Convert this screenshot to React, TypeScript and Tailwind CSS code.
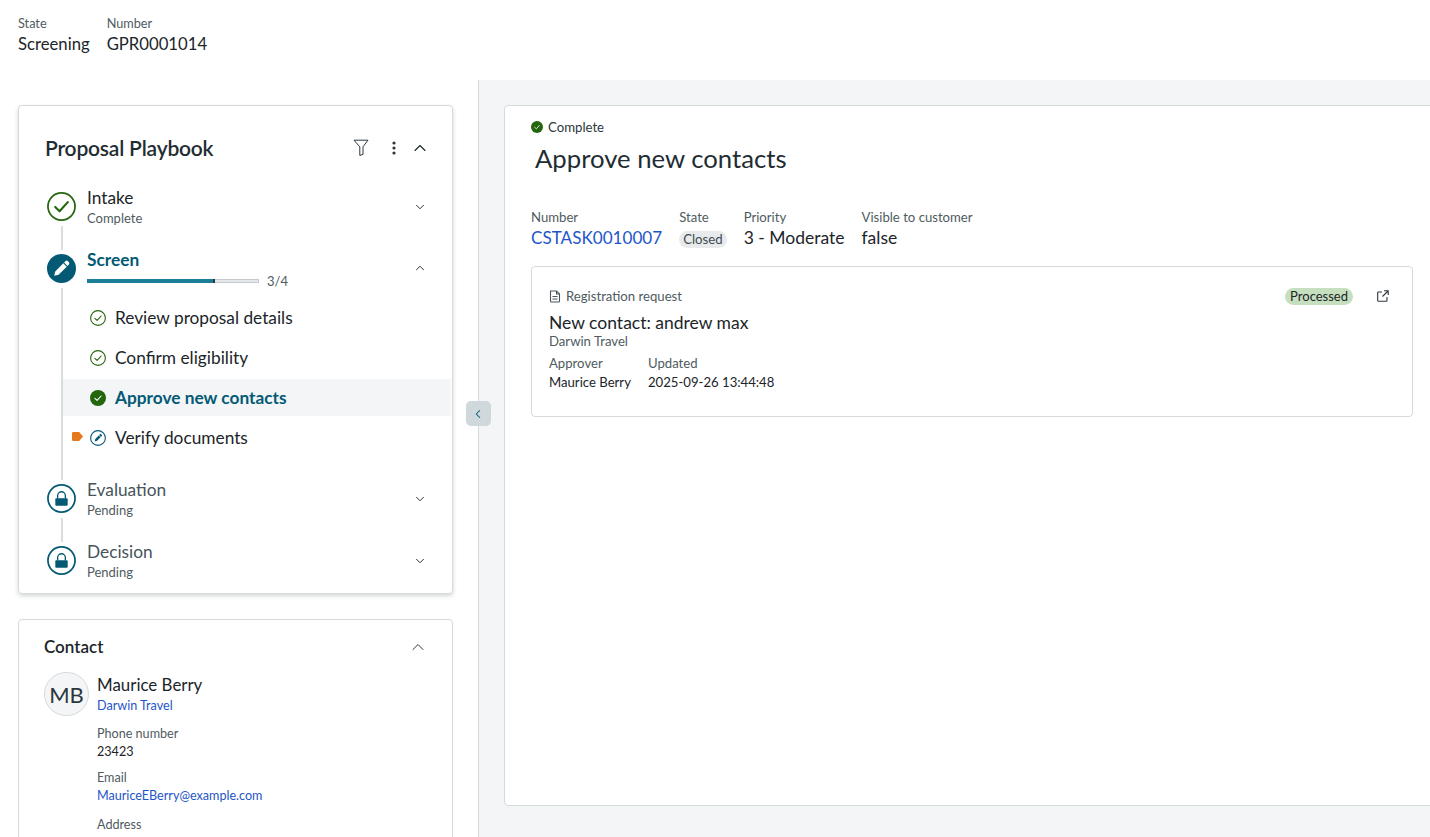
import { ChevronDown, ChevronLeft, ChevronUp } from "lucide-react";
import type { ReactNode } from "react";

const CheckCircle = ({ size, filled }: { size: number; filled?: boolean }) => (
  <svg width={size} height={size} viewBox="0 0 16 16" fill="none">
    <circle cx="8" cy="8" r={filled ? 8 : 7.4} fill={filled ? "#24660e" : "none"} stroke={filled ? "none" : "#24660e"} strokeWidth="1.1" />
    <path d="M4.9 8.3 7.1 10.4 11.1 6" stroke={filled ? "#fff" : "#24660e"} strokeWidth="1.1" strokeLinecap="round" strokeLinejoin="round" />
  </svg>
);

const BigCheck = () => (
  <svg width="29" height="29" viewBox="0 0 30 30" fill="none">
    <circle cx="15" cy="15" r="14" stroke="#24660e" strokeWidth="1.8" />
    <path d="M8.5 15.5 13 20 21.5 10.5" stroke="#24660e" strokeWidth="2.2" strokeLinecap="round" strokeLinejoin="round" />
  </svg>
);

const PencilCircle = () => (
  <svg width="29" height="29" viewBox="0 0 30 30">
    <circle cx="15" cy="15" r="15" fill="#045a75" />
    <path d="M19 7.5a1.9 1.9 0 0 1 2.7 0l.8.8a1.9 1.9 0 0 1 0 2.7l-1.3 1.3-3.5-3.5zM16.9 9.6l3.5 3.5-8.4 8.4-4.6 1.1 1.1-4.6z" fill="#fff" />
  </svg>
);

const SmallPencil = () => (
  <svg width="16" height="16" viewBox="0 0 16 16" fill="none">
    <circle cx="8" cy="8" r="7.4" stroke="#045a75" strokeWidth="1.1" />
    <path d="M9.9 4.2a.8.8 0 0 1 1.2 0l.7.7a.8.8 0 0 1 0 1.2l-.8.8-1.9-1.9zM8.7 5.4l1.9 1.9-3.5 3.5-2.4.6.6-2.4z" fill="#045a75" />
  </svg>
);

const LockCircle = () => (
  <svg width="29" height="29" viewBox="0 0 30 30" fill="none">
    <circle cx="15" cy="15" r="14" stroke="#045a75" strokeWidth="1.8" />
    <path d="M11 15v-3a4 4 0 0 1 8 0v3" stroke="#045a75" strokeWidth="1.4" />
    <rect x="8.6" y="14.8" width="12.8" height="7.6" rx="1" fill="#045a75" />
  </svg>
);

const Funnel = () => (
  <svg width="16" height="17" viewBox="0 0 16 17" fill="none">
    <path d="M1 1.2h14L10 7.8v7.6l-3.2 1V7.8z" stroke="#2b373d" strokeWidth="1" strokeLinejoin="round" />
  </svg>
);

const Kebab = () => (
  <svg width="4" height="14" viewBox="0 0 4 14" fill="#2b373d">
    <circle cx="2" cy="2" r="1.6" />
    <circle cx="2" cy="7" r="1.6" />
    <circle cx="2" cy="12" r="1.6" />
  </svg>
);

const Tag = () => (
  <svg width="11" height="9" viewBox="0 0 11 9">
    <path d="M1.2 0h6L11 4.5 7.2 9h-6A1.2 1.2 0 0 1 0 7.8V1.2A1.2 1.2 0 0 1 1.2 0z" fill="#e5791b" />
  </svg>
);

const DocIcon = () => (
  <svg width="12" height="13" viewBox="0 0 12 13" fill="none" stroke="#4a555b" strokeWidth="1.1">
    <path d="M1.5 1h6l3 3v7a1 1 0 0 1-1 1h-7a1 1 0 0 1-1-1z" />
    <path d="M3.5 6.5h5M3.5 9h5M7.5 1v3h3" />
  </svg>
);

const ExternalIcon = () => (
  <svg width="12" height="12" viewBox="0 0 12 12" fill="none" stroke="#2b373d" strokeWidth="1.1">
    <path d="M5 2H1.5a.8.8 0 0 0-.8.8v7.7c0 .4.4.8.8.8h7.7c.4 0 .8-.4.8-.8V7" />
    <path d="M7 .8h4.2V5M11 1 5.5 6.5" />
  </svg>
);

const Step = ({ icon, line, children }: { icon: ReactNode; line?: boolean; children: ReactNode }) => (
  <div className="flex gap-[11px]">
    <div className="flex w-[29px] shrink-0 flex-col items-center">
      <div className="h-[30px]">{icon}</div>
      {line && <div className="my-[4px] w-[2px] flex-1 bg-[#d8dde0]" />}
    </div>
    <div className="min-w-0 flex-1">{children}</div>
  </div>
);

const StepHeader = ({ title, sub, muted }: { title: string; sub: string; muted?: boolean }) => (
  <div className="flex h-[62px] items-start justify-between pr-[25px]">
    <div className="-mt-[6px]">
      <div className={`text-[17.3px] leading-[23px] ${muted ? "text-[#46545b]" : "text-[#1b2529]"}`}>{title}</div>
      <div className="text-[13px] leading-[18px] text-[#4f5b61]">{sub}</div>
    </div>
    <ChevronDown size={14} strokeWidth={1.6} className="mt-[8px] text-[#1b2529]" />
  </div>
);

const SubStep = ({ icon, label, active, tag }: { icon: ReactNode; label: string; active?: boolean; tag?: boolean }) => (
  <div className={`flex h-[37px] items-center ${active ? "bg-[#f4f5f7]" : ""}`}>
    <div className="flex w-[9px] justify-start pl-[9px]">{tag && <span className="-mt-[2px] block"><Tag /></span>}</div>
    <div className="ml-[18px] flex w-[16px] justify-center">{icon}</div>
    <span className={`ml-[9px] text-[17.3px] ${active ? "font-bold text-[#045a75]" : "text-[#1b2529]"}`}>{label}</span>
  </div>
);

const Field = ({ label, children }: { label: string; children: ReactNode }) => (
  <div>
    <div className="text-[13.15px] leading-[18px] text-[#4f5b61]">{label}</div>
    {children}
  </div>
);

export default function App() {
  return (
    <div className="flex h-[837px] w-[1430px] flex-col overflow-hidden bg-white font-['Lato',sans-serif] text-[#1b2529]">
      <header className="flex h-[80px] shrink-0 gap-[17px] px-[18px] pt-[14px]">
        <div>
          <div className="text-[12.7px] leading-[18px] text-[#4f5b61]">State</div>
          <div className="text-[16.7px] leading-[24px]">Screening</div>
        </div>
        <div>
          <div className="text-[12.7px] leading-[18px] text-[#4f5b61]">Number</div>
          <div className="text-[16.7px] leading-[24px]">GPR0001014</div>
        </div>
      </header>

      <div className="flex min-h-0 flex-1">
        <aside className="relative w-[479px] shrink-0 border-r border-[#d5dadd] pl-[18px] pt-[25px]">
          <section className="h-[489px] w-[435px] rounded-[4px] border border-[#d5dadd] shadow-[0_2px_4px_rgba(40,50,60,0.2)]">
            <div className="flex h-[86px] items-center justify-between pb-[2px] pl-[26px] pr-[22px]">
              <h2 className="text-[21px] font-semibold tracking-[-0.2px] text-[#1f2d33]">Proposal Playbook</h2>
              <div className="-mt-[1px] flex items-center">
                <Funnel />
                <span className="ml-[23px]"><Kebab /></span>
                <ChevronUp size={20} strokeWidth={1.3} className="ml-[14px] text-[#1b2529]" />
              </div>
            </div>
            <div className="pl-[28px]">
              <Step icon={<BigCheck />} line>
                <StepHeader title="Intake" sub="Complete" />
              </Step>
              <Step icon={<PencilCircle />} line>
                <div className="flex h-[45px] items-start justify-between pr-[25px]">
                  <div className="-mt-[6px]">
                    <div className="text-[17.3px] font-bold leading-[23px] text-[#045a75]">Screen</div>
                    <div className="mt-[1px] flex items-center gap-[8px]">
                      <div className="flex h-[4px] w-[172px] border border-[#c3c9cd] bg-[#e6e8ea]">
                        <div className="-my-px -ml-px h-[4px] w-[128px] border-r-2 border-[#2b373d] bg-[#1c7d99]" />
                      </div>
                      <span className="text-[13px] leading-[18px] text-[#4f5b61]">3/4</span>
                    </div>
                  </div>
                  <ChevronUp size={14} strokeWidth={1.6} className="mt-[7px] text-[#1b2529]" />
                </div>
                <div className="-ml-[24px] mr-[1px] flex flex-col gap-[3px] pb-[28px]">
                  <SubStep icon={<CheckCircle size={16} />} label="Review proposal details" />
                  <SubStep icon={<CheckCircle size={16} />} label="Confirm eligibility" />
                  <SubStep icon={<CheckCircle size={16} filled />} label="Approve new contacts" active />
                  <SubStep icon={<SmallPencil />} label="Verify documents" tag />
                </div>
              </Step>
              <Step icon={<LockCircle />} line>
                <StepHeader title="Evaluation" sub="Pending" muted />
              </Step>
              <Step icon={<LockCircle />}>
                <StepHeader title="Decision" sub="Pending" muted />
              </Step>
            </div>
          </section>

          <section className="mt-[25px] h-[260px] w-[435px] rounded-[4px] border border-[#d5dadd] pl-[25px] pr-[24px] pt-[15px]">
            <div className="flex items-center justify-between">
              <h3 className="text-[17px] font-semibold leading-[24px] text-[#1b2529]">Contact</h3>
              <ChevronUp size={20} strokeWidth={1.2} className="text-[#2b373d]" />
            </div>
            <div className="mt-[14px] flex gap-[8px]">
              <div className="-mt-[1px] flex h-[44px] w-[45px] shrink-0 items-center justify-center rounded-full border border-[#d5dadd] bg-[#f4f5f7] text-[22px] text-[#2b373d]">MB</div>
              <div>
                <div className="text-[16.9px] leading-[24px]">Maurice Berry</div>
                <a className="block text-[12.6px] leading-[18px] text-[#1e56c8]">Darwin Travel</a>
                <div className="mt-[10px]">
                  <div className="text-[12.6px] leading-[18px] text-[#4f5b61]">Phone number</div>
                  <div className="text-[12.6px] leading-[17px] text-[#1b2529]">23423</div>
                </div>
                <div className="mt-[9px]">
                  <div className="text-[12.6px] leading-[18px] text-[#4f5b61]">Email</div>
                  <a className="block text-[12.6px] leading-[17px] text-[#1e56c8]">MauriceEBerry@example.com</a>
                </div>
                <div className="mt-[12px] text-[12.6px] leading-[18px] text-[#4f5b61]">Address</div>
              </div>
            </div>
          </section>

          <button className="absolute left-[466px] top-[321px] flex h-[25px] w-[25px] items-center justify-center rounded-[5px] bg-[#cfd8da] pr-[1px] text-[#045a75]">
            <ChevronLeft size={14} strokeWidth={1.8} />
          </button>
        </aside>

        <main className="min-w-0 flex-1 overflow-hidden bg-[#f4f5f7] pb-[26px] pl-[25px] pt-[25px]">
          <div className="h-[701px] w-[940px] rounded-[4px] border border-[#d5dadd] bg-white pl-[26px] pt-[12px]">
            <div className="flex items-center gap-[5px] text-[13.2px] leading-[18px] text-[#2b373d]">
              <CheckCircle size={12} filled />
              <span>Complete</span>
            </div>
            <h1 className="ml-[4px] mt-[5px] text-[25.7px] leading-[34px] text-[#1f2d33]">Approve new contacts</h1>
            <div className="mt-[33px] flex gap-[17px]">
              <Field label="Number">
                <a className="text-[17.1px] leading-[24px] text-[#1e56c8]">CSTASK0010007</a>
              </Field>
              <Field label="State">
                <span className="inline-block rounded-full bg-[#e8eaeb] px-[4px] text-[13.2px] leading-[17px] text-[#3f4b51]">Closed</span>
              </Field>
              <Field label="Priority">
                <div className="text-[17.5px] leading-[24px]">3 - Moderate</div>
              </Field>
              <Field label="Visible to customer">
                <div className="text-[17.5px] leading-[24px]">false</div>
              </Field>
            </div>
            <div className="mt-[16px] h-[151px] w-[882px] rounded-[4px] border border-[#d5dadd] px-[17px] pt-[20px]">
              <div className="flex items-center justify-between">
                <div className="flex items-center gap-[5px] text-[13.15px] leading-[18px] text-[#4f5b61]">
                  <DocIcon />
                  <span>Registration request</span>
                </div>
                <div className="flex items-center gap-[24px] pr-[6px]">
                  <span className="rounded-full bg-[#c6e0bf] px-[5px] text-[13px] leading-[17px] text-[#1b2529]">Processed</span>
                  <ExternalIcon />
                </div>
              </div>
              <div className="mt-[7px] text-[17.5px] leading-[21px]">New contact: andrew max</div>
              <div className="text-[13.15px] leading-[17px] text-[#4f5b61]">Darwin Travel</div>
              <div className="mt-[4px] flex gap-[17px]">
                <div>
                  <div className="text-[13.15px] leading-[18px] text-[#4f5b61]">Approver</div>
                  <div className="text-[13.15px] leading-[20px]">Maurice Berry</div>
                </div>
                <div>
                  <div className="text-[13.15px] leading-[18px] text-[#4f5b61]">Updated</div>
                  <div className="text-[13.15px] leading-[20px]">2025-09-26 13:44:48</div>
                </div>
              </div>
            </div>
          </div>
        </main>
      </div>
    </div>
  );
}
